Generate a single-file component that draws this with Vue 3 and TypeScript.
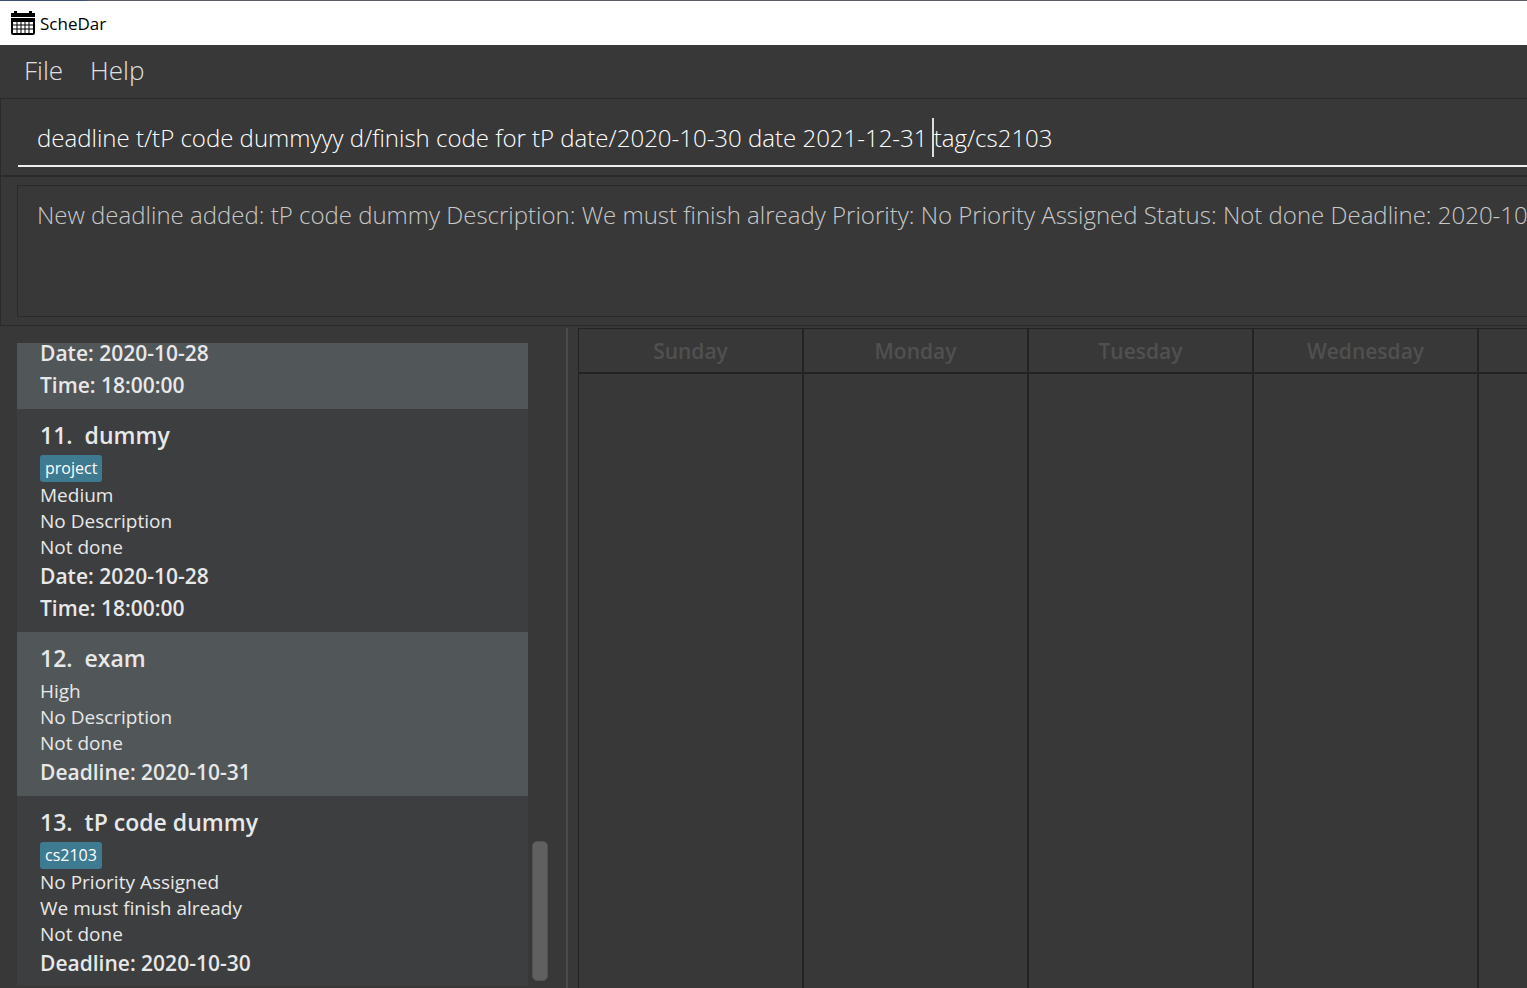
<script setup lang="ts">
import { ref } from 'vue'

interface Task {
  id: number
  title?: string
  tag?: string
  details: string[]
  schedule: string[]
}

const command = ref('deadline t/tP code dummyyy d/finish code for tP date/2020-10-30 date 2021-12-31 tag/cs2103')
const result = 'New deadline added: tP code dummy Description: We must finish already Priority: No Priority Assigned Status: Not done Deadline: 2020-10-30'

const tasks: Task[] = [
  { id: 10, details: [], schedule: ['Date: 2020-10-28', 'Time: 18:00:00'] },
  { id: 11, title: 'dummy', tag: 'project', details: ['Medium', 'No Description', 'Not done'], schedule: ['Date: 2020-10-28', 'Time: 18:00:00'] },
  { id: 12, title: 'exam', details: ['High', 'No Description', 'Not done'], schedule: ['Deadline: 2020-10-31'] },
  { id: 13, title: 'tP code dummy', tag: 'cs2103', details: ['No Priority Assigned', 'We must finish already', 'Not done'], schedule: ['Deadline: 2020-10-30'] },
]

const days = ['Sunday', 'Monday', 'Tuesday', 'Wednesday', '']
</script>

<template>
  <div class="app">
    <header class="titlebar">
      <svg class="logo" viewBox="0 0 24 24" width="24" height="24" aria-hidden="true">
        <path d="M0 2h3V0h3v2h12V0h3v2h3v4H0z" />
        <path fill-rule="evenodd" d="M0 7h24v15a2 2 0 0 1-2 2H2a2 2 0 0 1-2-2zM2 11v11h20V11z" />
        <path d="M2 14h20M2 18h20M6 11v11M10 11v11M14 11v11M18 11v11" fill="none" stroke="#000" stroke-width="1" />
      </svg>
      <span>ScheDar</span>
    </header>

    <nav class="menu">
      <button type="button">File</button>
      <button type="button">Help</button>
    </nav>

    <section class="command-pane">
      <div class="command-box">
        <input v-model="command" type="text" aria-label="Command" spellcheck="false" />
        <span class="caret"></span>
      </div>
    </section>

    <section class="result-pane">
      <textarea class="result" readonly wrap="off" aria-label="Result" :value="result"></textarea>
    </section>

    <main class="content">
      <aside class="task-panel">
        <ul class="tasks">
          <li v-for="task in tasks" :key="task.id" class="task">
            <h2 v-if="task.title"><span>{{ task.id }}.</span><span>{{ task.title }}</span></h2>
            <span v-if="task.tag" class="tag">{{ task.tag }}</span>
            <p v-for="line in task.details" :key="line">{{ line }}</p>
            <strong v-for="line in task.schedule" :key="line">{{ line }}</strong>
          </li>
        </ul>
        <div class="scroll-track"><div class="thumb"></div></div>
      </aside>
      <section class="calendar">
        <table>
          <thead>
            <tr><th v-for="day in days" :key="day" scope="col">{{ day }}</th></tr>
          </thead>
          <tbody>
            <tr><td v-for="day in days" :key="day"></td></tr>
          </tbody>
        </table>
      </section>
    </main>
  </div>
</template>

<style>
body {
  margin: 0;
  background: #383838;
}
</style>

<style scoped>
* {
  box-sizing: border-box;
}
.app {
  display: flex;
  flex-direction: column;
  height: 100vh;
  overflow: hidden;
  background: #383838;
  color: #e8e8e8;
  font-family: "Segoe UI", "Open Sans", "Noto Sans", sans-serif;
}
.titlebar {
  display: flex;
  flex: none;
  align-items: center;
  gap: 5px;
  height: 45px;
  padding-left: 11px;
  border-top: 1px solid #5c5c64;
  border-image: linear-gradient(90deg, #3f4f78 88px, #5c5c64 88px) 1;
  background: #fff;
  color: #000;
  font-size: 17px;
}
.menu {
  display: flex;
  flex: none;
  gap: 27px;
  height: 53px;
  padding-left: 24px;
}
.menu button {
  height: 50px;
  padding: 0;
  border: 0;
  background: none;
  color: #e0e0e0;
  font: 300 26px/50px "Segoe UI Light", "Open Sans", sans-serif;
}
.command-pane {
  flex: none;
  padding: 8px 0 8px 17px;
  border: 1px solid #2a2a2a;
  border-width: 1px 0 1px 1px;
}
.command-box {
  position: relative;
  border-bottom: 2px solid #eee;
}
.command-box input {
  display: block;
  width: 100%;
  height: 58px;
  padding: 2px 0 0 19px;
  border: 0;
  outline: 0;
  background: none;
  color: #fff;
  font: 300 24px "Segoe UI Light", "Open Sans", sans-serif;
}
.caret {
  position: absolute;
  top: 11px;
  left: 914px;
  width: 2px;
  height: 39px;
  background: #ddd;
}
.result-pane {
  flex: none;
  padding: 8px 0 8px 16px;
  border: 1px solid #2a2a2a;
  border-width: 1px 0 1px 1px;
}
.result {
  display: block;
  width: 100%;
  height: 132px;
  padding: 10px 0 0 19px;
  border: 1px solid #2a2a2a;
  border-right: 0;
  outline: 0;
  overflow: hidden;
  resize: none;
  background: none;
  color: #c8c8c8;
  font: 350 24px/38px "Segoe UI Light", "Open Sans", sans-serif;
}
.content {
  display: flex;
  flex: 1;
  min-height: 0;
  padding-top: 2px;
}
.task-panel {
  display: flex;
  flex: none;
  width: 568px;
  padding: 15px 18px 2px 17px;
  border-right: 2px solid #4b4b4b;
}
.tasks {
  display: flex;
  flex: 1;
  flex-direction: column;
  justify-content: flex-end;
  margin: 0;
  padding: 0;
  overflow: hidden;
  list-style: none;
}
.task {
  display: flex;
  flex: none;
  flex-direction: column;
  align-items: flex-start;
  padding: 11px 23px 8px;
  background: #3c3e3f;
}
.task:nth-child(odd) {
  background: #515658;
}
.task:first-child {
  padding-top: 0;
}
.task:last-child {
  padding-bottom: 7px;
}
.task h2 {
  display: flex;
  gap: 12px;
  margin: 0 0 4px;
  font-size: 23px;
  font-weight: 600;
  line-height: 31px;
}
.tag {
  padding: 0 5px;
  border-radius: 3px;
  background: #3e7b91;
  color: #fff;
  font-size: 16px;
  font-weight: 500;
  line-height: 27px;
}
.task p {
  margin: 0;
  font-size: 19px;
  line-height: 26px;
}
.task strong {
  font-size: 21px;
  font-weight: 600;
  line-height: 32px;
}
.scroll-track {
  display: flex;
  flex: none;
  flex-direction: column;
  justify-content: flex-end;
  width: 20px;
  padding: 0 0 5px 4px;
}
.thumb {
  height: 140px;
  border: 1px solid #525252;
  border-radius: 5px;
  background: #606060;
}
.calendar {
  flex: 1;
  min-width: 0;
  padding-left: 10px;
  overflow: hidden;
}
.calendar table {
  width: 1125px;
  height: 100%;
  border-spacing: 0;
  table-layout: fixed;
}
.calendar th,
.calendar td {
  padding: 0;
  border: 1px solid #232323;
}
.calendar td {
  border-bottom: 0;
}
.calendar th {
  height: 45px;
  color: #505050;
  font-size: 21px;
  font-weight: 600;
}
</style>
